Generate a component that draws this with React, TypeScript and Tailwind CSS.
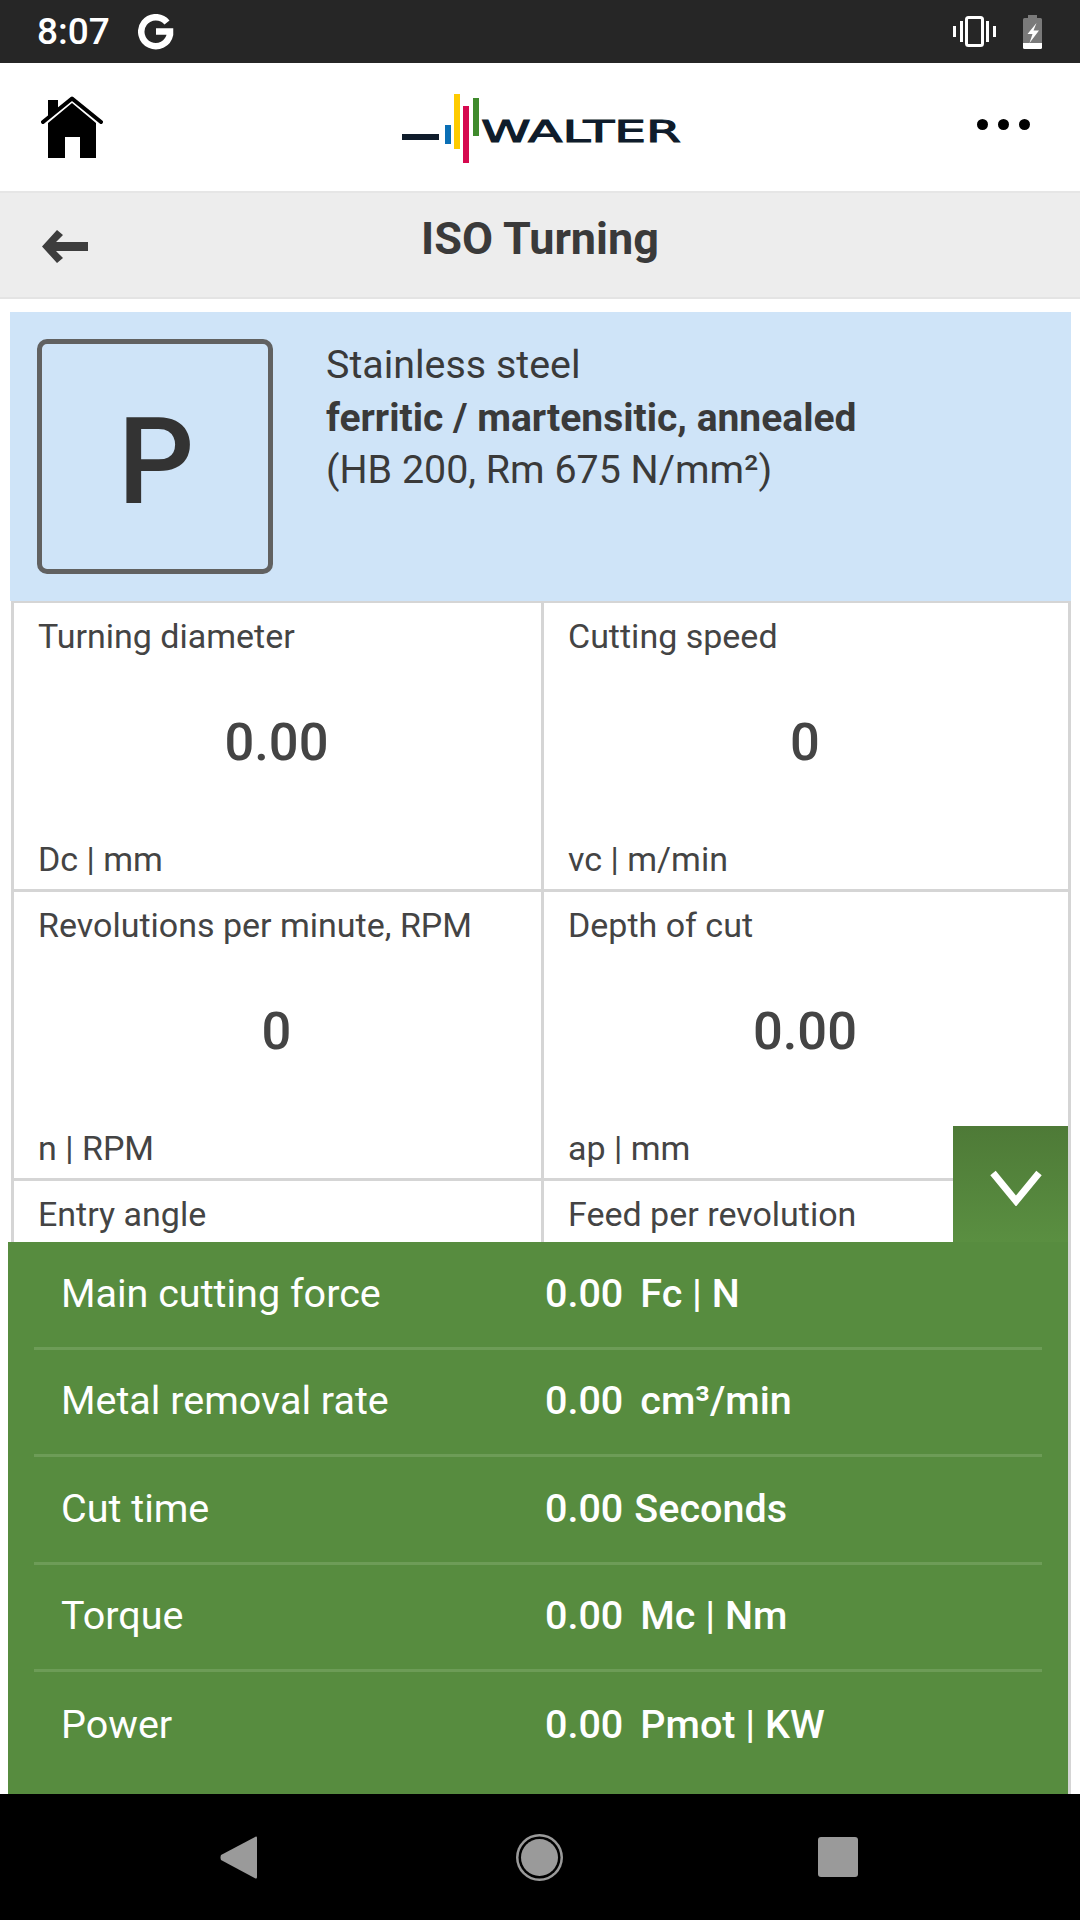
const cells = [
  { label: "Turning diameter", value: "0.00", unit: "Dc | mm" },
  { label: "Cutting speed", value: "0", unit: "vc | m/min" },
  { label: "Revolutions per minute, RPM", value: "0", unit: "n | RPM" },
  { label: "Depth of cut", value: "0.00", unit: "ap | mm" },
  { label: "Entry angle", value: "", unit: "" },
  { label: "Feed per revolution", value: "", unit: "" },
];

const results = [
  { label: "Main cutting force", value: "0.00", unit: "Fc | N" },
  { label: "Metal removal rate", value: "0.00", unit: "cm³/min" },
  { label: "Cut time", value: "0.00", unit: "Seconds", tight: true },
  { label: "Torque", value: "0.00", unit: "Mc | Nm" },
  { label: "Power", value: "0.00", unit: "Pmot | KW" },
];

function StatusBar() {
  return (
    <div className="flex h-[63px] shrink-0 items-center bg-[#262626] pl-[37px] pr-[38px] text-white">
      <span className="text-[37px] font-medium leading-none">8:07</span>
      {/* Google G */}
      <svg className="ml-[28px]" width="36" height="36" viewBox="0 0 36 36" fill="none">
        <path d="M29 8.500A14.500 14.500 0 1 0 32 20.500V17.500H18" stroke="white" strokeWidth="6.500" />
      </svg>
      <div className="ml-auto flex items-center gap-[27px]">
        <svg width="43" height="31" viewBox="0 0 43 31" fill="white">
          <rect x="0" y="10" width="3" height="11" />
          <rect x="7" y="5" width="3" height="21" />
          <rect x="13.500" y="1.500" width="16" height="28" rx="2" fill="none" stroke="white" strokeWidth="3" />
          <rect x="33" y="5" width="3" height="21" />
          <rect x="40" y="10" width="3" height="11" />
        </svg>
        <svg width="19" height="34" viewBox="0 0 19 34">
          <path d="M5 0H14V3H17.500Q19 3 19 4.500V28H0V4.500Q0 3 1.500 3H5Z" fill="#7a7a7a" />
          <path d="M0 28H19V32.500Q19 34 17.500 34H1.500Q0 34 0 32.500Z" fill="white" />
          <path d="M13.500 8L4.500 19H9.500L6.500 28L16 15.500H10.500Z" fill="white" />
        </svg>
      </div>
    </div>
  );
}

function HomeIcon() {
  return (
    <svg width="62" height="62" viewBox="0 0 62 62" fill="black">
      <path d="M7 4H17V14L7 22Z" />
      <path d="M31 7L55 27V62H39V41H24V62H7V27Z" />
      <path d="M2 26L31 2.500L60 26" fill="none" stroke="black" strokeWidth="4" strokeLinecap="round" strokeLinejoin="round" />
    </svg>
  );
}

function Logo() {
  return (
    <svg width="285" height="72" viewBox="0 0 285 72">
      <rect x="2" y="40" width="37" height="6" fill="#0f1c2b" />
      <rect x="45" y="31" width="6" height="19" fill="#0a6fb5" />
      <rect x="54" y="0" width="6" height="55" fill="#fecb00" />
      <rect x="63" y="12" width="6" height="57" fill="#d6094f" />
      <rect x="73" y="4" width="6" height="38" fill="#3f8a2c" />
      <text
        x="81"
        y="48"
        textLength="200"
        lengthAdjust="spacingAndGlyphs"
        fontFamily="'DejaVu Sans', sans-serif"
        fontWeight="400"
        fontSize="30"
        fill="#0f1c2b"
        stroke="#0f1c2b"
        strokeWidth="1"
      >
        WALTER
      </text>
    </svg>
  );
}

function BackArrow() {
  return (
    <svg width="46" height="33" viewBox="0 0 46 33" fill="#3d3d3d">
      <path d="M15 0L21 5L14 12H46V21H14L21 28L15 33L0 16.500Z" />
    </svg>
  );
}

function NavBar() {
  return (
    <div className="flex h-[126px] shrink-0 items-center bg-black pl-[220px] pr-[222px]">
      <svg width="37" height="43" viewBox="0 0 37 43" fill="#9a9a9a">
        <path d="M36 0.500Q37 0 37 2V41Q37 43 35.500 42.500L1 24Q0 21.500 1 19Z" />
      </svg>
      <svg className="ml-[259px]" width="47" height="47" viewBox="0 0 47 47">
        <circle cx="23.500" cy="23.500" r="23.500" fill="#9a9a9a" />
        <circle cx="23.500" cy="23.500" r="21" fill="black" />
        <circle cx="23.500" cy="23.500" r="18.500" fill="#9a9a9a" />
      </svg>
      <div className="ml-auto h-[40px] w-[40px] rounded-[3px] bg-[#9a9a9a]" />
    </div>
  );
}

export default function App() {
  return (
    <div className="flex h-[1920px] w-[1080px] flex-col overflow-hidden bg-white font-['Roboto',sans-serif]">
      <StatusBar />

      {/* App header */}
      <div className="flex h-[130px] shrink-0 items-center justify-between border-b-2 border-[#e6e6e6] pl-[41px] pr-[50px]">
        <HomeIcon />
        <div className="ml-[4px] mt-[6px]">
          <Logo />
        </div>
        <div className="flex gap-[10px] pb-[6px]">
          <span className="h-[11px] w-[11px] rounded-full bg-black" />
          <span className="h-[11px] w-[11px] rounded-full bg-black" />
          <span className="h-[11px] w-[11px] rounded-full bg-black" />
        </div>
      </div>

      {/* Page title */}
      <div className="relative flex h-[106px] shrink-0 items-center justify-center border-b-2 border-[#e4e4e4] bg-[#ededed]">
        <div className="absolute left-[42px] top-[37px]">
          <BackArrow />
        </div>
        <h1 className="pb-[13px] text-[45px] font-bold leading-none text-[#3a3a3a]">ISO Turning</h1>
      </div>

      <div className="min-h-0 flex-1 overflow-hidden pl-[10px] pr-[9px] pt-[13px]">
        {/* Material */}
        <div className="flex h-[289px] bg-[#cfe4f8] pl-[27px] pt-[27px]">
          <div className="flex h-[235px] w-[236px] items-center justify-center rounded-[10px] border-[5px] border-[#616161] pl-[2px] pt-[10px] text-[120px] font-medium leading-none text-[#333333]">
            P
          </div>
          <div className="pl-[53px] text-[39.400px] leading-[52.500px] text-[#3a3a3a]">
            <p>Stainless steel</p>
            <p className="text-[39px] font-bold">ferritic / martensitic, annealed</p>
            <p>(HB 200, Rm 675 N/mm²)</p>
          </div>
        </div>

        {/* Parameters */}
        <div className="ml-[1px] grid grid-cols-[530px_1fr] border-x-[3px] border-t-[2px] border-[#d5d5d5]">
          {cells.map((c, i) => (
            <div
              key={c.label}
              className={`flex h-[289px] flex-col justify-between border-b-[3px] border-[#d5d5d5] pb-[4px] pt-[8px] text-[34px] text-[#444444] ${
                i % 2 === 0 ? "border-r-[3px]" : ""
              }`}
            >
              <span className="pl-[24px]">{c.label}</span>
              {c.value && <span className="mb-[12px] pr-[2px] text-center text-[52.500px] font-medium leading-none">{c.value}</span>}
              {c.unit && <span className="pl-[24px]">{c.unit}</span>}
            </div>
          ))}
        </div>
      </div>

      {/* Results drawer */}
      <div className="relative ml-[8px] h-[552px] w-[1063px] shrink-0 border-r-[3px] border-[#d5d5d5] bg-[#578c3f] px-[26px] text-white">
        <div className="absolute right-0 top-[-116px] flex h-[116px] w-[115px] items-center justify-center bg-gradient-to-b from-[#4e7a37] to-[#5a8f41] pl-[11px] pt-[8px]">
          <svg width="52" height="36" viewBox="0 0 52 36" fill="none">
            <path d="M3 3L26 31L49 3" stroke="white" strokeWidth="7" />
          </svg>
        </div>
        {results.map((r, i) => (
          <div
            key={r.label}
            className={`flex h-[107.500px] items-center pb-[2px] pl-[27px] text-[39.500px] ${
              i < 4 ? "border-b-[3px] border-[#6d9c57]" : ""
            }`}
          >
            <span className="w-[484px] shrink-0">{r.label}</span>
            <span className="font-medium">{r.value}</span>
            <span className={`font-medium ${r.tight ? "ml-[11px]" : "ml-[17px]"}`}>{r.unit}</span>
          </div>
        ))}
      </div>

      <NavBar />
    </div>
  );
}
